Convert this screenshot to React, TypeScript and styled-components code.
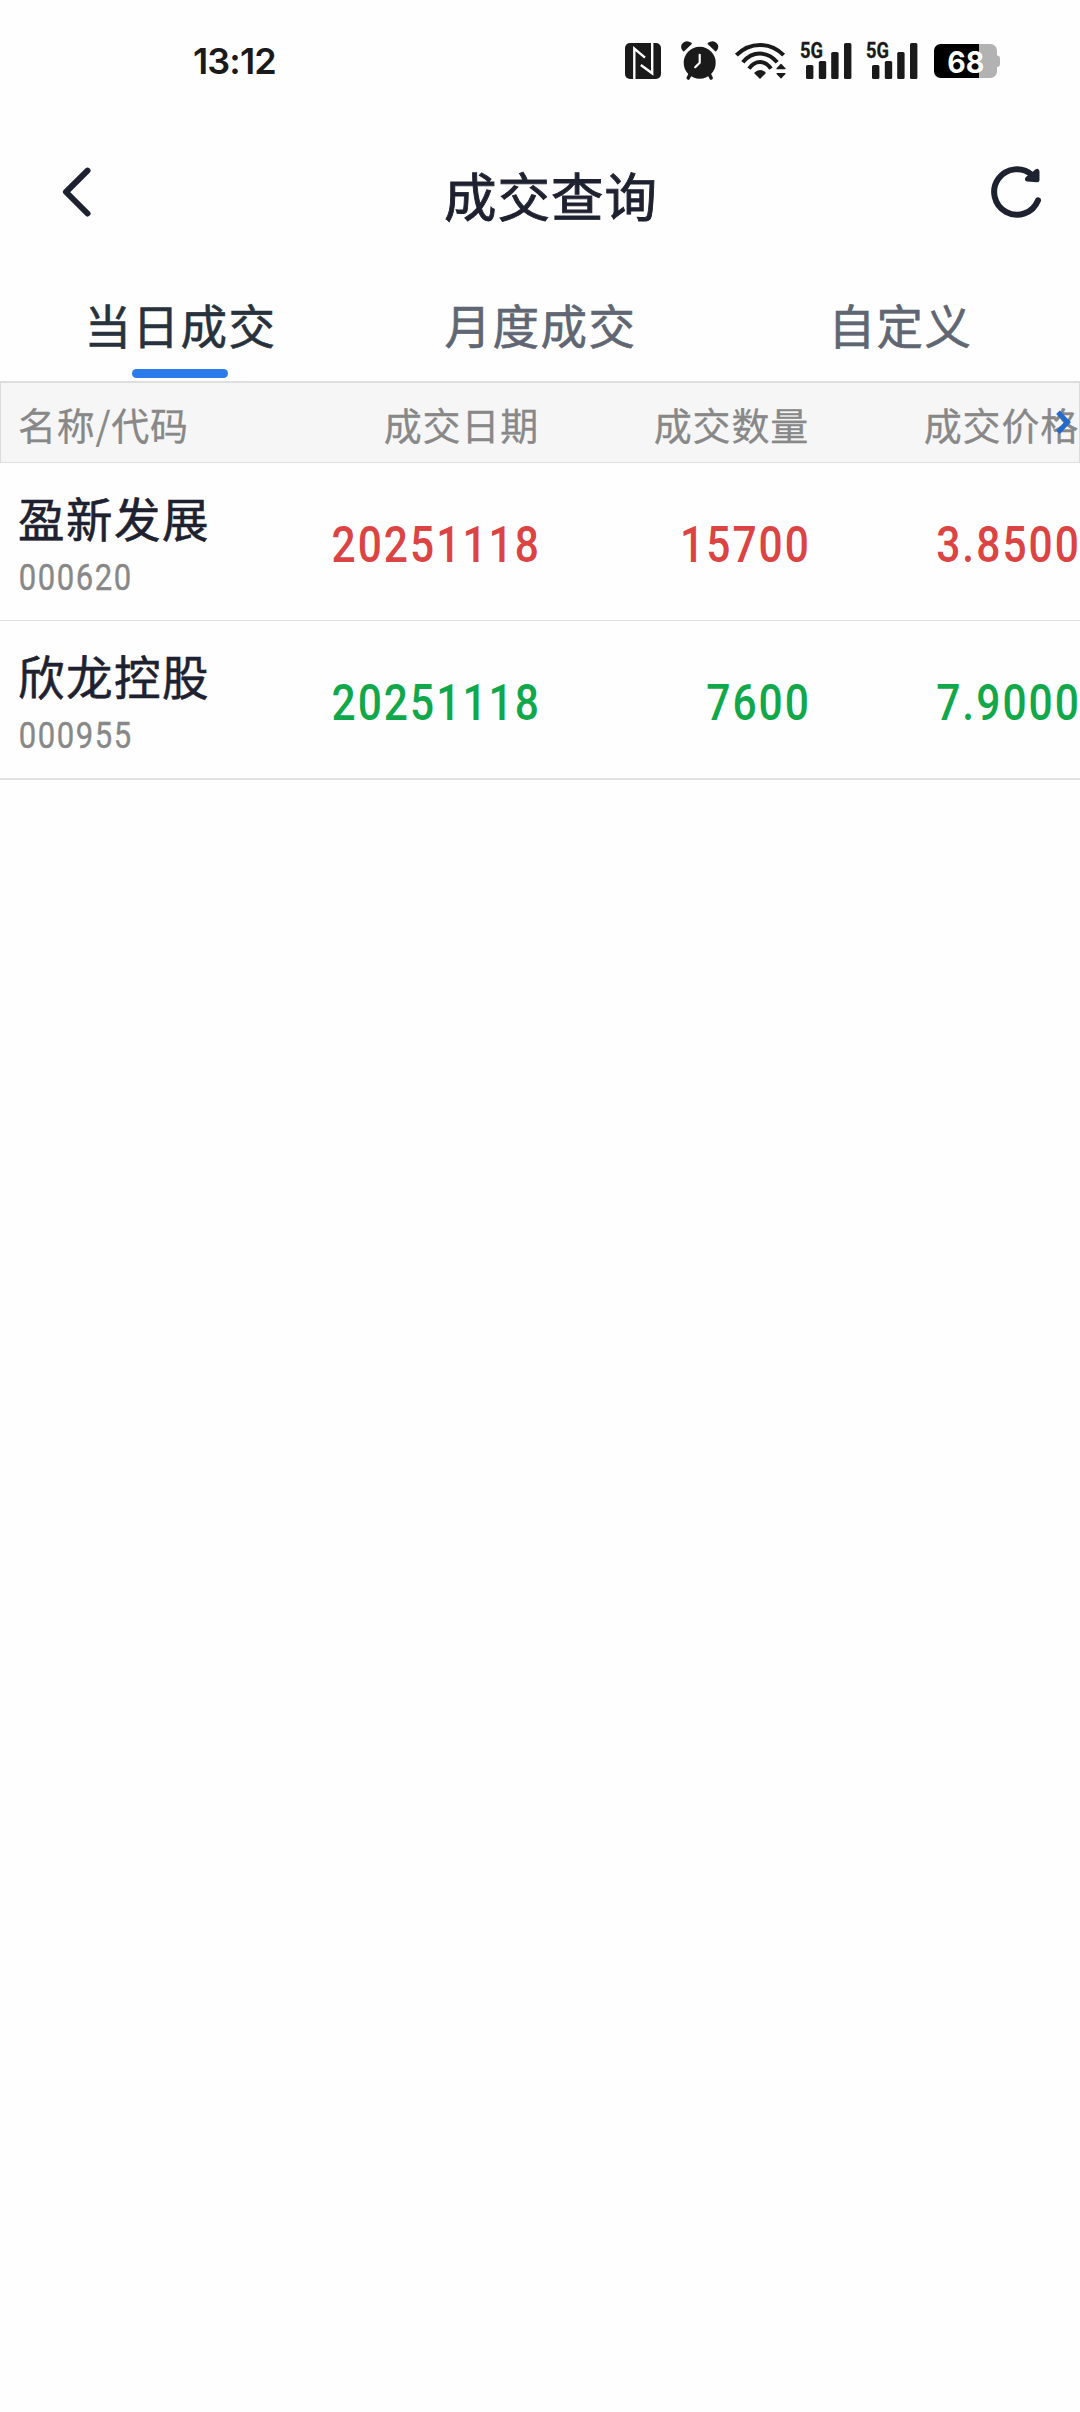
import React from 'react';
import styled, { createGlobalStyle } from 'styled-components';

const CJK = '"Noto Sans CJK SC", sans-serif';

const GlobalStyle = createGlobalStyle`
  * { box-sizing: border-box; }
  body { margin: 0; background: #fefefe; }
`;

const Screen = styled.div`
  display: flex;
  flex-direction: column;
  width: 1080px;
  height: 2412px;
  overflow: hidden;
  background: #fefefe;
  font-family: ${CJK};
  color: #1e2130;
`;

const StatusBar = styled.header`
  display: flex;
  justify-content: space-between;
  align-items: center;
  height: 122px;
  padding: 0 80px 0 193px;
  color: #1a1a1a;
`;

const Clock = styled.time`
  font: 600 36px/40px Inter, sans-serif;
  letter-spacing: -0.9px;
`;

const StatusIcons = styled.div`
  display: flex;
  align-items: center;
  svg { display: block; flex: none; overflow: visible; }
`;

const IconSlot = styled.span<{ $gap: number }>`
  margin-left: ${(p) => p.$gap}px;
`;

const TitleBar = styled.nav`
  display: flex;
  align-items: center;
  justify-content: space-between;
  height: 140px;
  padding: 0 38px 0 60px;
`;

const IconButton = styled.button`
  display: flex;
  padding: 0;
  border: 0;
  background: none;
  color: #1e2130;
  svg { display: block; overflow: visible; }
`;

const Title = styled.h1`
  margin: 3px 0 0;
  padding-left: 20px;
  font: 400 52.5px/70px ${CJK};
  letter-spacing: 1px;
  -webkit-text-stroke: 0.9px currentColor;
`;

const Tabs = styled.div`
  display: grid;
  grid-template-columns: repeat(3, 1fr);
  height: 119px;
`;

const Tab = styled.div<{ $active?: boolean }>`
  display: flex;
  flex-direction: column;
  align-items: center;
  padding: 32px 0 0 1px;
  font: 400 46.5px/60px ${CJK};
  letter-spacing: 1.5px;
  -webkit-text-stroke: 0.6px currentColor;
  color: ${(p) => (p.$active ? '#28323d' : '#606672')};
`;

const Underline = styled.i`
  width: 96px;
  height: 9px;
  margin: 15px 1px 0 0;
  border-radius: 5px;
  background: #2c7bec;
`;

const Table = styled.div`
  display: flex;
  flex-direction: column;
`;

const HeadRow = styled.div`
  position: relative;
  display: grid;
  grid-template-columns: repeat(4, 270px);
  align-items: center;
  height: 82px;
  background: #f6f6f6;
  box-shadow: inset 1px 0 #dcdcdc, inset -1px 0 #dcdcdc, inset 0 2px #dedede, inset 0 -1px #dedede;
`;

const HeadCell = styled.span<{ $left?: boolean }>`
  padding: ${(p) => (p.$left ? '4px 0 0 18px' : '4px 1px 0 0')};
  text-align: ${(p) => (p.$left ? 'left' : 'right')};
  font: 400 38px/56px ${CJK};
  letter-spacing: 0.8px;
  -webkit-text-stroke: 0.3px currentColor;
  color: #888;
  white-space: nowrap;
`;

const MoreArrow = styled.svg`
  position: absolute;
  right: 9px;
  top: 29px;
`;

const Row = styled.div<{ $last?: boolean }>`
  display: grid;
  grid-template-columns: repeat(4, 270px);
  align-items: center;
  height: ${(p) => (p.$last ? 159 : 158)}px;
  border-bottom: ${(p) => (p.$last ? 2 : 1)}px solid #e2e2e2;
`;

const Stock = styled.div`
  display: flex;
  flex-direction: column;
  padding: 8px 0 0 18px;
`;

const StockName = styled.span`
  font: 400 46.5px/60px ${CJK};
  letter-spacing: 1.5px;
  -webkit-text-stroke: 0.6px currentColor;
  white-space: nowrap;
`;

const StockCode = styled.span`
  padding: 5px 0 0 1px;
  font: 400 36.5px/52px Roboto, sans-serif;
  letter-spacing: 1.8px;
  -webkit-text-stroke: 0.4px currentColor;
  color: #888;
  transform: scaleX(0.85);
  transform-origin: left center;
`;

const Value = styled.span<{ $side: 'buy' | 'sell' }>`
  margin-right: -1px;
  padding-top: 7px;
  text-align: right;
  font: 500 50px/60px Roboto, sans-serif;
  letter-spacing: 2.4px;
  white-space: nowrap;
  color: ${(p) => (p.$side === 'buy' ? '#dc4343' : '#10a84a')};
  transform: scaleX(0.85);
  transform-origin: right center;
`;

const NfcIcon = () => (
  <svg width="36" height="36" viewBox="0 0 36 36" fill="none">
    <rect width="36" height="36" rx="5" fill="#1a1a1a" />
    <path d="M9.3 36V5.5L20 14.6M27.2 0V30.3L15.8 22" stroke="#fefefe" strokeWidth="2.4" />
  </svg>
);

const AlarmIcon = () => (
  <svg width="38" height="38" viewBox="0 0 38 38" fill="none" stroke="#1a1a1a" strokeLinecap="round" strokeLinejoin="round">
    <circle cx="18.7" cy="20.7" r="16" fill="#1a1a1a" stroke="none" />
    <path d="M2.600 8.500C-1.500 3.500 4 -2.500 9.900 1.600ZM34.800 8.500C38.900 3.500 33.400 -2.500 27.500 1.600Z" fill="#1a1a1a" strokeWidth="1.800" />
    <path d="M9 32.500L7.300 36M28.400 32.500L30.100 36" strokeWidth="3.600" />
    <path d="M18.700 12.800V20.800L14.200 25.200" stroke="#fefefe" strokeWidth="2.200" />
  </svg>
);

const WifiIcon = () => (
  <svg width="51" height="36" viewBox="0 0 51 36" fill="none" stroke="#1a1a1a" strokeWidth="4">
    <path d="M1.400 12.200Q11.500 2 25 2T48.600 12.200M7.800 19.300Q15 10.600 25 10.600T42.200 19.300M14 25.700Q18.500 19 25 19T36 25.700" />
    <path d="M19 30Q25 24 31 30L25 36Z" fill="#1a1a1a" stroke="none" />
    <path d="M46 21.500L50 25.700H42ZM42 30.700H50L46 34.800Z" fill="#1a1a1a" strokeWidth="1.200" strokeLinejoin="round" />
  </svg>
);

const SignalIcon = () => (
  <svg width="51" height="38" viewBox="0 0 51 38" fill="#1a1a1a">
    <text x="0" y="15.500" fontFamily="Roboto, sans-serif" fontWeight="700" fontSize="21.500" textLength="23" lengthAdjust="spacingAndGlyphs" stroke="#1a1a1a" strokeWidth="0.300">5G</text>
    <rect x="6" y="23" width="7.400" height="14" rx="1.600" />
    <rect x="18.800" y="19" width="7.400" height="18" rx="1.600" />
    <rect x="31.200" y="10" width="7.400" height="27" rx="1.600" />
    <rect x="44" y="1" width="7.400" height="36" rx="1.600" />
  </svg>
);

const BatteryIcon = () => (
  <svg width="66" height="34" viewBox="0 0 66 34">
    <path d="M45 0H56.500A6.500 6.500 0 0 1 63 6.500V11.500A3 3 0 0 1 66 14.500V20A3 3 0 0 1 63 23V27.500A6.500 6.500 0 0 1 56.500 34H45Z" fill="#b2b2b2" />
    <path d="M45 0H6.500A6.500 6.500 0 0 0 0 6.500V27.500A6.500 6.500 0 0 0 6.500 34H45Z" fill="#000" />
    <text x="13.200" y="28.500" fontFamily="Inter, sans-serif" fontWeight="700" fontSize="30" textLength="37" lengthAdjust="spacingAndGlyphs" fill="#fff">68</text>
  </svg>
);

const BackIcon = () => (
  <svg width="30" height="50" viewBox="0 0 30 50" fill="none" stroke="currentColor" strokeWidth="6" strokeLinecap="round" strokeLinejoin="round">
    <path d="M27.500 3.700L6 25L27.500 46.500" />
  </svg>
);

const RefreshIcon = () => (
  <svg width="50" height="52" viewBox="0 0 50 52" fill="none" stroke="currentColor" strokeWidth="6" strokeLinecap="round" strokeLinejoin="round">
    <path d="M46 34.300A22.700 22.700 0 1 1 40.500 9.500" />
    <path d="M45 5.500V13.800L35.500 13Z" fill="currentColor" strokeWidth="5" />
  </svg>
);

const trades = [
  { name: '盈新发展', code: '000620', date: '20251118', amount: '15700', price: '3.8500', side: 'buy' as const },
  { name: '欣龙控股', code: '000955', date: '20251118', amount: '7600', price: '7.9000', side: 'sell' as const },
];

export default function App() {
  return (
    <Screen>
      <GlobalStyle />
      <StatusBar>
        <Clock>13:12</Clock>
        <StatusIcons>
          <IconSlot $gap={0}><NfcIcon /></IconSlot>
          <IconSlot $gap={20}><AlarmIcon /></IconSlot>
          <IconSlot $gap={16}><WifiIcon /></IconSlot>
          <IconSlot $gap={14}><SignalIcon /></IconSlot>
          <IconSlot $gap={15}><SignalIcon /></IconSlot>
          <IconSlot $gap={17}><BatteryIcon /></IconSlot>
        </StatusIcons>
      </StatusBar>
      <TitleBar>
        <IconButton aria-label="返回"><BackIcon /></IconButton>
        <Title>成交查询</Title>
        <IconButton aria-label="刷新"><RefreshIcon /></IconButton>
      </TitleBar>
      <Tabs>
        <Tab $active>当日成交<Underline /></Tab>
        <Tab>月度成交</Tab>
        <Tab>自定义</Tab>
      </Tabs>
      <Table>
        <HeadRow>
          <HeadCell $left>名称/代码</HeadCell>
          <HeadCell>成交日期</HeadCell>
          <HeadCell>成交数量</HeadCell>
          <HeadCell>成交价格</HeadCell>
          <MoreArrow width="15" height="26" viewBox="0 0 15 26" fill="none" stroke="#2469cc" strokeWidth="5">
            <path d="M2 2.200L11.500 12.300L2 22.400" />
          </MoreArrow>
        </HeadRow>
        {trades.map((t, i) => (
          <Row key={t.code} $last={i === trades.length - 1}>
            <Stock>
              <StockName>{t.name}</StockName>
              <StockCode>{t.code}</StockCode>
            </Stock>
            <Value $side={t.side}>{t.date}</Value>
            <Value $side={t.side}>{t.amount}</Value>
            <Value $side={t.side}>{t.price}</Value>
          </Row>
        ))}
      </Table>
    </Screen>
  );
}
